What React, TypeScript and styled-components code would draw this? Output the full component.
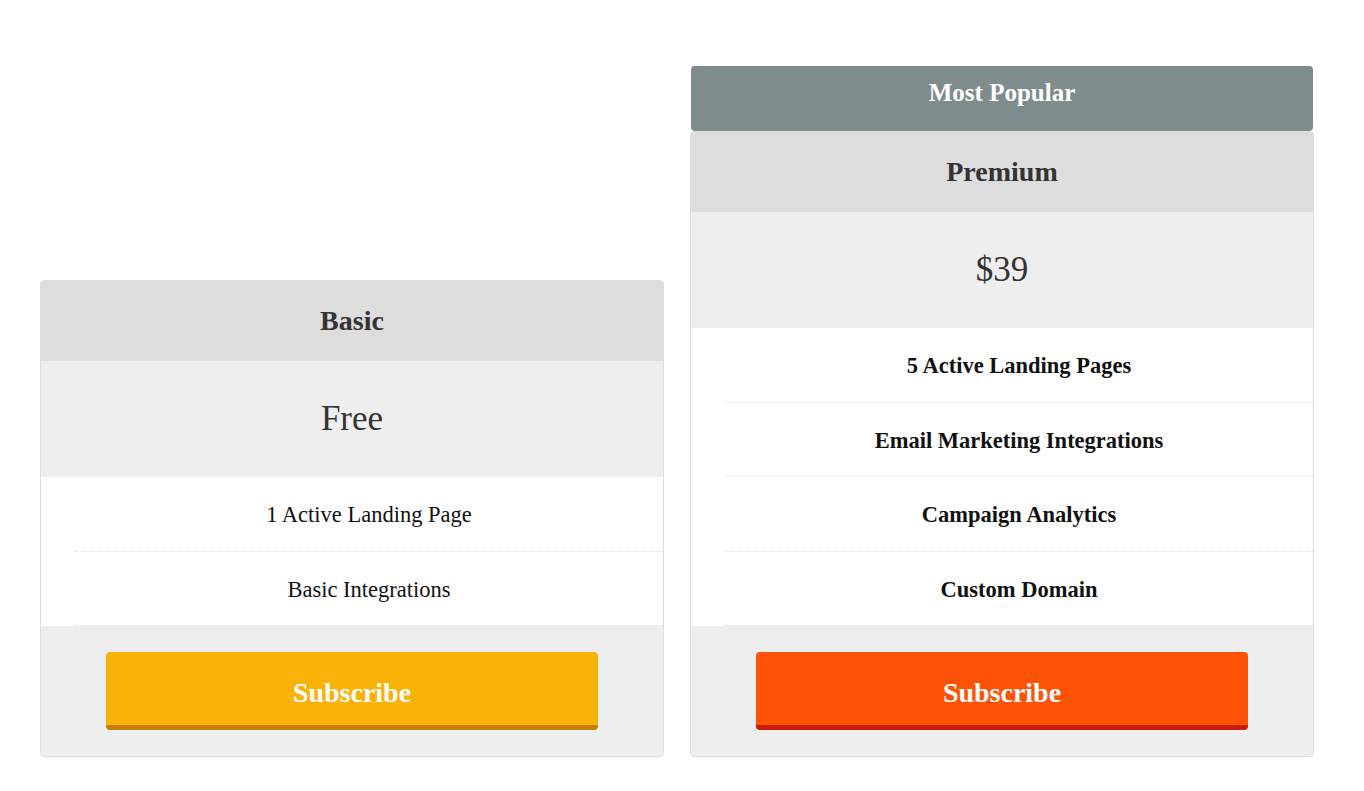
import React from "react";
import styled, {createGlobalStyle} from "styled-components";

const GlobalStyle = createGlobalStyle`
  body {
    margin: 0;
    background: #fff;
    font-family: "Liberation Serif", "Times New Roman", serif;
  }
`

interface IPlan {
  name: string;
  price: string;
  features: string[];
  popular?: boolean;
}

const plans: IPlan[] = [
  {name: "Basic", price: "Free", features: ["1 Active Landing Page", "Basic Integrations"]},
  {
    name: "Premium",
    price: "$39",
    popular: true,
    features: ["5 Active Landing Pages", "Email Marketing Integrations", "Campaign Analytics", "Custom Domain"]
  },
];

const App = () => {
  return (
    <>
      <GlobalStyle/>
      <Wrapper>
        {plans.map((plan) => (
          <Column key={plan.name}>
            {plan.popular && <Banner>Most Popular</Banner>}
            <Card>
              <Title>{plan.name}</Title>
              <Price>{plan.price}</Price>
              <Features>
                {plan.features.map((f) => (
                  <Feature key={f} $bold={plan.popular}>{f}</Feature>
                ))}
              </Features>
              <Footer>
                <Button $popular={plan.popular}>Subscribe</Button>
              </Footer>
            </Card>
          </Column>
        ))}
      </Wrapper>
    </>
  )
}

export default App;


const Wrapper = styled.div`
  display: flex;
  align-items: flex-end;
  gap: 26px;
  padding: 66px 0 0 40px;
`

const Column = styled.div`
  width: 624px;
  display: flex;
  flex-direction: column;
`

const Banner = styled.div`
  box-sizing: border-box;
  height: 65px;
  margin: 0 1px;
  padding-bottom: 12px;
  display: flex;
  align-items: center;
  justify-content: center;
  background-color: #7f8c8d;
  color: #fff;
  font-size: 25px;
  font-weight: bold;
  border-radius: 4px;
`

const Card = styled.div`
  border: 1px solid #ddd;
  border-radius: 4px;
  overflow: hidden;
  background: #fff;
`

const Title = styled.div`
  height: 80px;
  display: flex;
  align-items: center;
  justify-content: center;
  background-color: #ddd;
  color: #333;
  font-size: 28px;
  font-weight: bold;
`

const Price = styled.div`
  height: 116px;
  display: flex;
  align-items: center;
  justify-content: center;
  background-color: #eee;
  color: #333;
  font-size: 35px;
`

const Features = styled.ul`
  list-style: none;
  margin: 0;
  padding: 0 0 0 34px;
`

const Feature = styled.li<{ $bold?: boolean }>`
  box-sizing: border-box;
  height: 74.5px;
  padding-top: 3px;
  display: flex;
  align-items: center;
  justify-content: center;
  border-bottom: 1px dotted #ddd;
  color: #111;
  font-size: 22.5px;
  font-weight: ${({$bold}) => ($bold ? "bold" : "normal")};
`

const Footer = styled.div`
  height: 130px;
  display: flex;
  align-items: center;
  justify-content: center;
  background-color: #eee;
`

const Button = styled.button<{ $popular?: boolean }>`
  box-sizing: border-box;
  width: 492px;
  height: 78px;
  border: none;
  border-bottom: 5px solid ${({$popular}) => ($popular ? "#c91c03" : "#c87f0a")};
  border-radius: 4px;
  background-color: ${({$popular}) => ($popular ? "#fe5307" : "#f9b208")};
  color: #fff;
  font-family: "Liberation Serif", "Times New Roman", serif;
  font-size: 28px;
  font-weight: bold;
  cursor: pointer;
  padding: 8px 0 0;
`
